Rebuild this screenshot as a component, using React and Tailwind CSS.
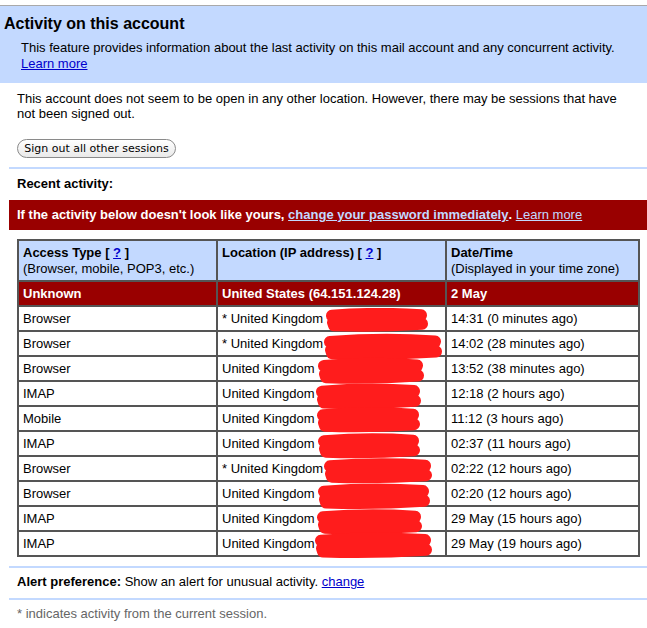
import React from 'react';

// scribble = red marker blotting out the IP address
const rows = [
  { type: 'Browser', current: true, when: '14:31 (0 minutes ago)', s: { x: 107, y: 1, w: 104, h: 24 } },
  { type: 'Browser', current: true, when: '14:02 (28 minutes ago)', s: { x: 105, y: 1, w: 120, h: 28 } },
  { type: 'Browser', current: false, when: '13:52 (38 minutes ago)', s: { x: 99, y: 0, w: 108, h: 28 } },
  { type: 'IMAP', current: false, when: '12:18 (2 hours ago)', s: { x: 97, y: 1, w: 107, h: 27 } },
  { type: 'Mobile', current: false, when: '11:12 (3 hours ago)', s: { x: 98, y: 0, w: 105, h: 26 } },
  { type: 'IMAP', current: false, when: '02:37 (11 hours ago)', s: { x: 99, y: 1, w: 104, h: 26 } },
  { type: 'Browser', current: true, when: '02:22 (12 hours ago)', s: { x: 105, y: 1, w: 110, h: 26 } },
  { type: 'Browser', current: false, when: '02:20 (12 hours ago)', s: { x: 99, y: 1, w: 114, h: 27 } },
  { type: 'IMAP', current: false, when: '29 May (15 hours ago)', s: { x: 98, y: 2, w: 107, h: 26 } },
  { type: 'IMAP', current: false, when: '29 May (19 hours ago)', s: { x: 96, y: 0, w: 119, h: 27 } },
];

const Scribble = ({ x, y, w, h }) => (
  <svg
    width={w}
    height={h}
    className="absolute pointer-events-none z-10"
    style={{ left: x, top: y }}
  >
    <path
      d={`M7 ${h * 0.32} Q ${w / 2} ${h * 0.18} ${w - 8} ${h * 0.3} L ${w - 10} ${h * 0.45} Q ${w / 2} ${h * 0.55} 8 ${h * 0.6} L 9 ${h * 0.72} Q ${w / 2} ${h * 0.78} ${w - 7} ${h * 0.66}`}
      fill="none"
      stroke="#ff1c1c"
      strokeWidth="12"
      strokeLinecap="round"
      strokeLinejoin="round"
    />
  </svg>
);

const Rule = ({ className = '' }) => (
  <div className={`ml-[9px] h-[2px] bg-[#c3d9ff] ${className}`} />
);

export default function App() {
  const cell = 'border-2 border-[#555] px-[4px] align-middle';
  return (
    <div className="w-[647px] h-[628px] overflow-hidden bg-white text-[13px] text-black font-['Liberation_Sans',Arial,sans-serif]">
      <div className="h-[5px]" />

      {/* Header box */}
      <div className="bg-[#c3d9ff] border-t border-[#a9a9a9] pt-[8px] pb-[11px]">
        <h1 className="pl-1 text-base font-bold leading-5">Activity on this account</h1>
        <p className="mt-[6px] pl-[21px] leading-4">
          This feature provides information about the last activity on this mail account and any concurrent activity.
          <br />
          <a href="#" className="text-[#0000cc] underline">Learn more</a>
        </p>
      </div>

      <p className="pl-[17px] pt-[8px] leading-[15px]">
        This account does not seem to be open in any other location. However, there may be sessions that have
        <br />
        not been signed out.
      </p>

      <button className="ml-[17px] mt-[18px] flex h-[19px] w-[159px] items-center justify-center rounded-full border border-[#8a8a8a] bg-gradient-to-b from-white to-[#e9e9e9] text-[11px] leading-none font-['DejaVu_Sans',sans-serif]">
        Sign out all other sessions
      </button>

      <Rule className="mt-[9px]" />

      <div className="mt-[7px] pl-[17px] font-bold leading-4">Recent activity:</div>

      <div className="ml-[9px] mt-[8px] flex h-[30px] items-center bg-[#990000] pl-2 text-white">
        <span className="font-bold">If the activity below doesn&apos;t look like yours,&nbsp;</span>
        <a href="#" className="font-bold text-[#c3d9ff] underline">change your password immediately</a>
        <span className="font-bold">.&nbsp;</span>
        <a href="#" className="text-[#c3d9ff] underline">Learn more</a>
      </div>

      <table className="ml-[17px] mt-[9px] w-[621px] table-fixed border-collapse border-2 border-[#555]">
        <colgroup>
          <col className="w-[199px]" />
          <col className="w-[229px]" />
          <col className="w-[193px]" />
        </colgroup>
        <thead>
          <tr className="h-[41px] bg-[#c3d9ff] leading-4">
            <th className={`${cell} text-left font-normal`}>
              <div className="font-bold">
                Access Type [ <a href="#" className="text-[#0000cc] underline">?</a> ]
              </div>
              <div>(Browser, mobile, POP3, etc.)</div>
            </th>
            <th className={`${cell} text-left font-normal align-top pt-[4px]`}>
              <div className="font-bold">
                Location (IP address) [ <a href="#" className="text-[#0000cc] underline">?</a> ]
              </div>
            </th>
            <th className={`${cell} text-left font-normal`}>
              <div className="font-bold">Date/Time</div>
              <div>(Displayed in your time zone)</div>
            </th>
          </tr>
        </thead>
        <tbody>
          <tr className="h-[25px] bg-[#990000] font-bold text-white">
            <td className={cell}>Unknown</td>
            <td className={cell}>United States (64.151.124.28)</td>
            <td className={cell}>2 May</td>
          </tr>
          {rows.map((r, i) => (
            <tr key={i} className="h-[25px]">
              <td className={cell}>{r.type}</td>
              <td className={`${cell} relative`}>
                {r.current ? '* ' : ''}United Kingdom
                <Scribble {...r.s} />
              </td>
              <td className={cell}>{r.when}</td>
            </tr>
          ))}
        </tbody>
      </table>

      <Rule className="mt-[9px]" />

      <div className="mt-[6px] pl-[17px] leading-4">
        <span className="font-bold">Alert preference:</span> Show an alert for unusual activity.{' '}
        <a href="#" className="text-[#0000cc] underline">change</a>
      </div>

      <Rule className="mt-[8px]" />

      <div className="mt-[6px] pl-[17px] leading-4 text-[#666]">
        * indicates activity from the current session.
      </div>
    </div>
  );
}
